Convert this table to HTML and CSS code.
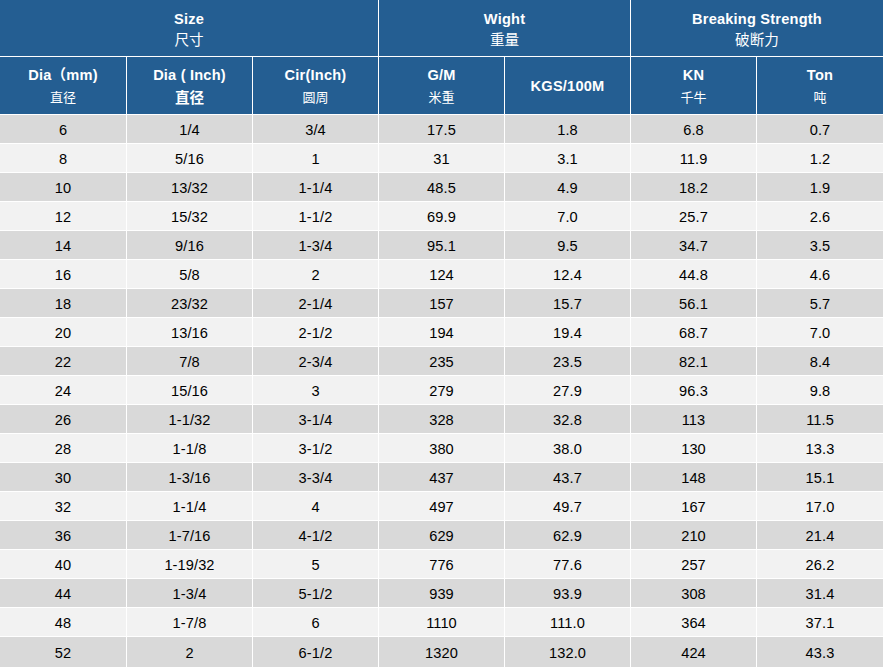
FILE: index.html
```html
<!DOCTYPE html>
<html>
<head>
<meta charset="utf-8">
<link rel="stylesheet" href="styles.css">
</head>
<body>
<div class="sheet">
  <div class="hd group span3"><span class="en">Size</span><span class="zh">尺寸</span></div>
  <div class="hd group span2"><span class="en">Wight</span><span class="zh">重量</span></div>
  <div class="hd group span2"><span class="en">Breaking Strength</span><span class="zh">破断力</span></div>

  <div class="hd sub"><span class="en">Dia（mm)</span><span class="zh">直径</span></div>
  <div class="hd sub"><span class="en">Dia ( Inch)</span><span class="zh big">直径</span></div>
  <div class="hd sub"><span class="en">Cir(Inch)</span><span class="zh">圆周</span></div>
  <div class="hd sub"><span class="en">G/M</span><span class="zh">米重</span></div>
  <div class="hd sub"><span class="en">KGS/100M</span></div>
  <div class="hd sub"><span class="en">KN</span><span class="zh">千牛</span></div>
  <div class="hd sub"><span class="en">Ton</span><span class="zh">吨</span></div>

  <div class="c odd">6</div><div class="c odd">1/4</div><div class="c odd">3/4</div><div class="c odd">17.5</div><div class="c odd">1.8</div><div class="c odd">6.8</div><div class="c odd">0.7</div>
  <div class="c even">8</div><div class="c even">5/16</div><div class="c even">1</div><div class="c even">31</div><div class="c even">3.1</div><div class="c even">11.9</div><div class="c even">1.2</div>
  <div class="c odd">10</div><div class="c odd">13/32</div><div class="c odd">1-1/4</div><div class="c odd">48.5</div><div class="c odd">4.9</div><div class="c odd">18.2</div><div class="c odd">1.9</div>
  <div class="c even">12</div><div class="c even">15/32</div><div class="c even">1-1/2</div><div class="c even">69.9</div><div class="c even">7.0</div><div class="c even">25.7</div><div class="c even">2.6</div>
  <div class="c odd">14</div><div class="c odd">9/16</div><div class="c odd">1-3/4</div><div class="c odd">95.1</div><div class="c odd">9.5</div><div class="c odd">34.7</div><div class="c odd">3.5</div>
  <div class="c even">16</div><div class="c even">5/8</div><div class="c even">2</div><div class="c even">124</div><div class="c even">12.4</div><div class="c even">44.8</div><div class="c even">4.6</div>
  <div class="c odd">18</div><div class="c odd">23/32</div><div class="c odd">2-1/4</div><div class="c odd">157</div><div class="c odd">15.7</div><div class="c odd">56.1</div><div class="c odd">5.7</div>
  <div class="c even">20</div><div class="c even">13/16</div><div class="c even">2-1/2</div><div class="c even">194</div><div class="c even">19.4</div><div class="c even">68.7</div><div class="c even">7.0</div>
  <div class="c odd">22</div><div class="c odd">7/8</div><div class="c odd">2-3/4</div><div class="c odd">235</div><div class="c odd">23.5</div><div class="c odd">82.1</div><div class="c odd">8.4</div>
  <div class="c even">24</div><div class="c even">15/16</div><div class="c even">3</div><div class="c even">279</div><div class="c even">27.9</div><div class="c even">96.3</div><div class="c even">9.8</div>
  <div class="c odd">26</div><div class="c odd">1-1/32</div><div class="c odd">3-1/4</div><div class="c odd">328</div><div class="c odd">32.8</div><div class="c odd">113</div><div class="c odd">11.5</div>
  <div class="c even">28</div><div class="c even">1-1/8</div><div class="c even">3-1/2</div><div class="c even">380</div><div class="c even">38.0</div><div class="c even">130</div><div class="c even">13.3</div>
  <div class="c odd">30</div><div class="c odd">1-3/16</div><div class="c odd">3-3/4</div><div class="c odd">437</div><div class="c odd">43.7</div><div class="c odd">148</div><div class="c odd">15.1</div>
  <div class="c even">32</div><div class="c even">1-1/4</div><div class="c even">4</div><div class="c even">497</div><div class="c even">49.7</div><div class="c even">167</div><div class="c even">17.0</div>
  <div class="c odd">36</div><div class="c odd">1-7/16</div><div class="c odd">4-1/2</div><div class="c odd">629</div><div class="c odd">62.9</div><div class="c odd">210</div><div class="c odd">21.4</div>
  <div class="c even">40</div><div class="c even">1-19/32</div><div class="c even">5</div><div class="c even">776</div><div class="c even">77.6</div><div class="c even">257</div><div class="c even">26.2</div>
  <div class="c odd">44</div><div class="c odd">1-3/4</div><div class="c odd">5-1/2</div><div class="c odd">939</div><div class="c odd">93.9</div><div class="c odd">308</div><div class="c odd">31.4</div>
  <div class="c even">48</div><div class="c even">1-7/8</div><div class="c even">6</div><div class="c even">1110</div><div class="c even">111.0</div><div class="c even">364</div><div class="c even">37.1</div>
  <div class="c odd">52</div><div class="c odd">2</div><div class="c odd">6-1/2</div><div class="c odd">1320</div><div class="c odd">132.0</div><div class="c odd">424</div><div class="c odd">43.3</div>
</div>
</body>
</html>
```

FILE: styles.css
```css
html, body {
  margin: 0;
  padding: 0;
  background: #ffffff;
}

.sheet {
  width: 883px;
  height: 667px;
  display: grid;
  grid-template-columns: 126px repeat(5, 125px) 126px;
  grid-template-rows: 56px 57px repeat(18, 28px) 30px;
  gap: 1px;
  background: #ffffff;
  font-family: "Liberation Sans", Arial, "Noto Sans CJK SC", sans-serif;
  font-size: 14.6px;
  color: #000000;
}

.hd {
  background: #245e92;
  color: #ffffff;
  font-weight: bold;
  display: flex;
  flex-direction: column;
  align-items: center;
  justify-content: center;
  text-align: center;
}

.hd .en { letter-spacing: 0.2px; }

.span3 { grid-column: span 3; }
.span2 { grid-column: span 2; }

.group { line-height: 20px; padding-top: 2px; }
.group .zh {
  font-family: "Noto Sans CJK SC", sans-serif;
  font-weight: normal;
  font-size: 14.6px;
}

.sub { line-height: 22px; }
.sub .zh {
  font-family: "Noto Sans CJK SC", sans-serif;
  font-weight: normal;
  font-size: 13px;
}
.sub .zh.big {
  font-weight: bold;
  font-size: 14.6px;
}

.c {
  display: flex;
  align-items: center;
  justify-content: center;
  padding-top: 1px;
  letter-spacing: 0.1px;
}

.odd { background: #d9d9d9; }
.even { background: #f2f2f2; }
```
